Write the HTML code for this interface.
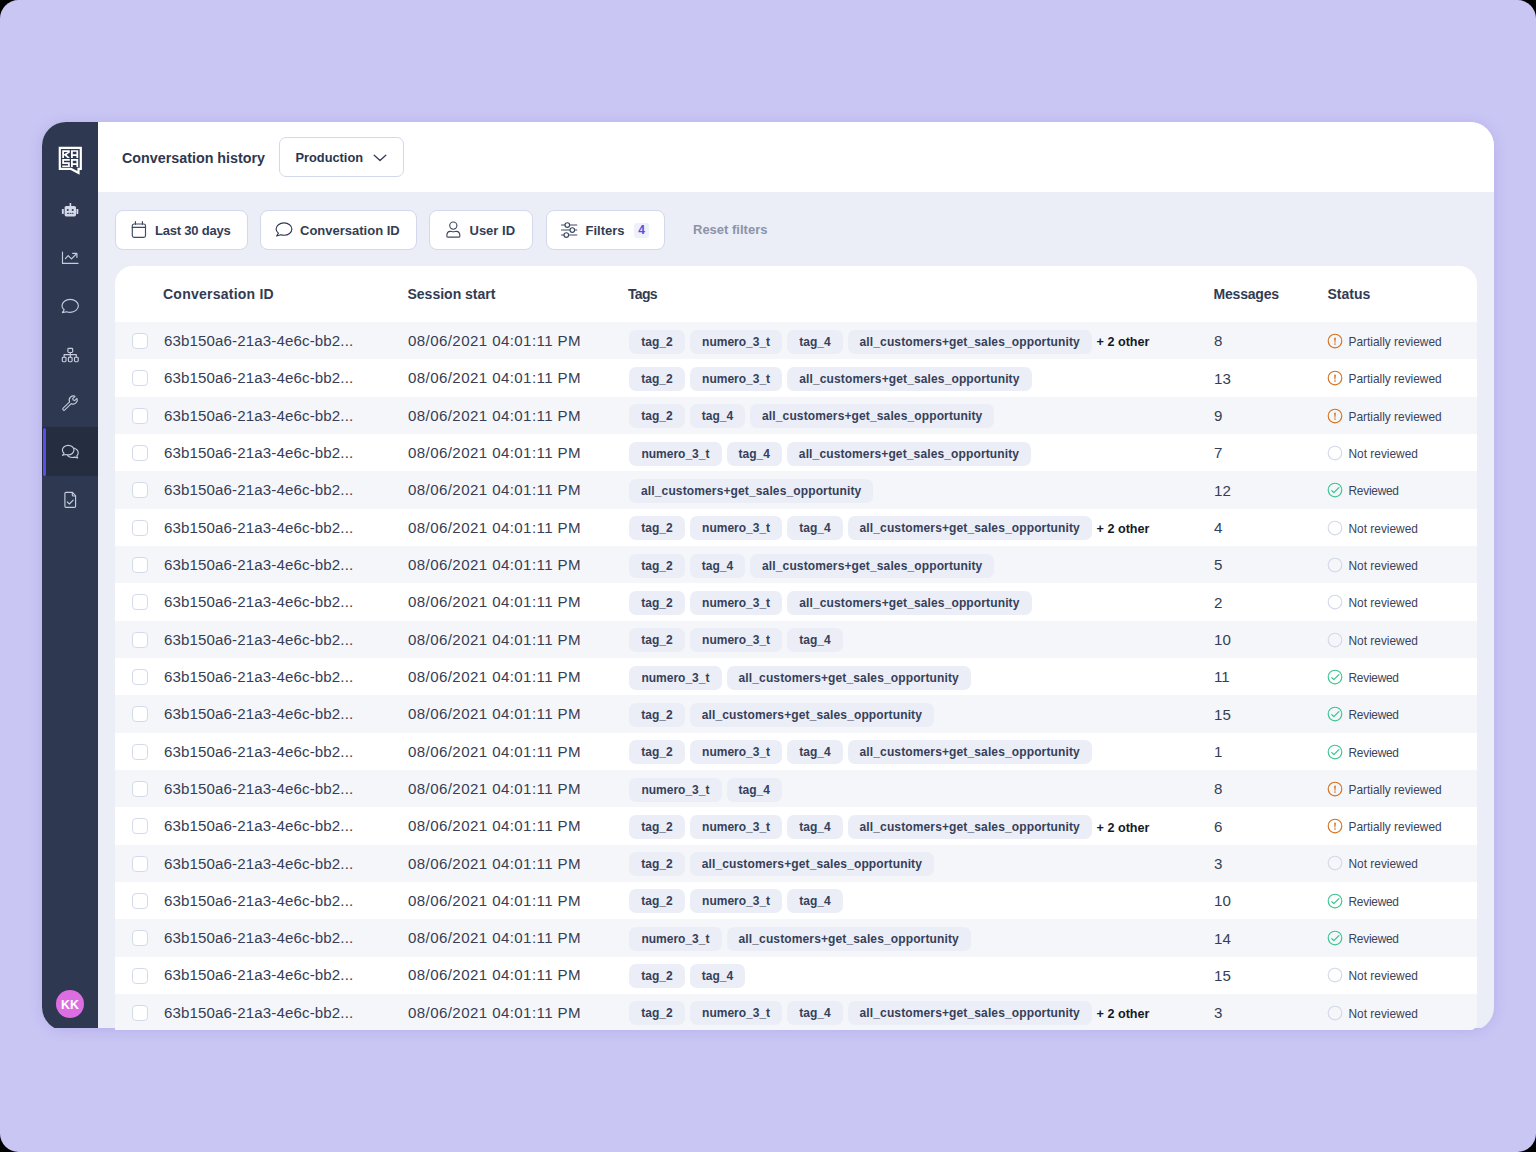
<!DOCTYPE html><html><head><meta charset="utf-8"><style>
*{box-sizing:border-box;margin:0;padding:0}
html,body{width:1536px;height:1152px;overflow:hidden;background:#000;font-family:"Liberation Sans",sans-serif}
.frame{position:absolute;left:0;top:0;width:1536px;height:1152px;border-radius:18.5px;background:#C9C6F4;overflow:hidden}
.shadow{position:absolute;left:42px;top:122px;width:1452px;height:906px;border-radius:24px;box-shadow:0 2px 14px rgba(90,70,200,0.18)}
.clip{position:absolute;left:42px;top:122px;width:1452px;height:906px;overflow:hidden}
.app{position:absolute;left:0;top:0;width:1452px;height:909px;border-radius:24px;background:#EBEEF7;overflow:hidden}
.side{position:absolute;left:0;top:0;width:56px;height:909px;background:#2E3850}
.active{position:absolute;left:0;top:305px;width:56px;height:49px;background:#252D40}
.abar{position:absolute;left:0.5px;top:305.5px;width:3.5px;height:48px;border-radius:2px;background:#5B4EE6}
.hdr{position:absolute;left:56px;top:0;width:1396px;height:70px;background:#fff}
.title{position:absolute;left:24px;top:26.5px;font-size:14.3px;font-weight:700;color:#2E374E;line-height:18px;white-space:nowrap}
.dd{position:absolute;left:181px;top:15px;width:125px;height:40px;border:1px solid #D3D8EA;border-radius:7px;background:#fff}
.dd span{position:absolute;left:15.5px;top:10.5px;font-size:12.8px;font-weight:700;color:#2B354D;line-height:18px}
.btn{position:absolute;top:88px;height:40px;border:1px solid #D3D8EA;border-radius:8px;background:#fff}
.btn .lbl{position:absolute;top:10.5px;font-size:13px;font-weight:700;color:#333D55;line-height:18px;white-space:nowrap}
.btn svg{position:absolute}
.badge{position:absolute;left:87px;top:12px;width:15px;height:15px;border-radius:3px;background:#EEF0FA;color:#5A4FE0;font-size:12px;font-weight:700;line-height:15px;text-align:center}
.reset{position:absolute;left:651px;top:98.5px;font-size:13px;font-weight:700;color:#8C93A8;line-height:18px;white-space:nowrap}
.card{position:absolute;left:115px;top:266px;width:1362px;height:764px;background:#fff;border-radius:18px 18px 7px 0;overflow:hidden}
.th{position:absolute;top:19px;font-size:14px;font-weight:700;color:#323B52;line-height:18px;white-space:nowrap}
.row{position:absolute;left:0;width:1362px;height:37.32px}
.row.odd{background:#F5F6FA}
.cb{position:absolute;left:17px;top:11px;width:15.5px;height:16px;border:1px solid #D5DAEB;border-radius:4px;background:#fff}
.cid,.date,.msg{position:absolute;top:9.95px;font-size:15.1px;color:#353E54;line-height:18px;white-space:nowrap}
.cid{left:49px;letter-spacing:0.12px}
.date{left:293px;letter-spacing:0.4px}
.msg{left:1099px;top:10.4px}
.pill{position:absolute;top:7.6px;height:24px;border-radius:7px;background:#EBEEF7;color:#364059;font-size:12px;font-weight:700;line-height:25.4px;text-align:center;white-space:nowrap}
.more{position:absolute;top:8.4px;height:24px;line-height:24px;font-size:12.6px;font-weight:700;color:#151A26;white-space:nowrap}
.st{position:absolute;left:1212px;top:10.9px;height:16px}
.si{position:absolute;left:0;top:0}
.stl{position:absolute;left:21.5px;top:1px;font-size:11.9px;color:#3A435A;line-height:16px;white-space:nowrap}
.avatar{position:absolute;left:14px;top:868px;width:28px;height:28px;border-radius:14px;background:#DC6EE2;color:#fff;font-size:12.4px;font-weight:700;line-height:31px;text-align:center;letter-spacing:0.2px;text-indent:0.2px}
</style></head><body><div class="frame">
<div class="shadow"></div><div class="clip"><div class="app">
<div class="side"><div class="active"></div><div class="abar"></div>
<svg style="position:absolute;left:0;top:0" width="56" height="906" viewBox="42 122 56 906">
 <g fill="#fff">
  <path fill-rule="evenodd" d="M58.7 146.7H81.9V169.9H79.6V174.8L70.6 169.9H58.7Z M60.9 148.9V167.7H71.2L77.4 171.1V167.7H79.7V148.9Z"/>
  <path d="M62.2 150.2H69.8V152.6L66.6 154.7L69.9 158.1H67.5L64.6 155.4H64V158.1H62.2Z M64 151.9H67.9L64 154.3Z" fill-rule="evenodd"/>
  <path d="M71 150.2H78.2V158.1H76.4V156H72.8V158.1H71Z M72.8 151.8V154.3H76.4V151.8Z" fill-rule="evenodd"/>
  <path d="M62.2 159.1H69.8V160.8H64V162.2H69.8V167.1H62.2V165.4H68V163.9H62.2Z"/>
  <path d="M71 159.1H78.2V167.1H76.4V165H72.8V167.1H71Z M72.8 160.8V163.3H76.4V160.8Z" fill-rule="evenodd"/>
 </g>
 <g fill="#D3D8EA">
  <rect x="64.6" y="206" width="11.4" height="10.4" rx="1.6"/>
  <rect x="69.6" y="203" width="1.6" height="3.5"/>
  <rect x="61.9" y="209" width="1.9" height="5" rx="0.4"/>
  <rect x="76.4" y="209" width="1.9" height="5" rx="0.4"/>
 </g>
 <g fill="#2E3850">
  <rect x="66.9" y="209.1" width="1.7" height="1.8"/>
  <rect x="71.8" y="209.1" width="1.7" height="1.8"/>
  <rect x="66.9" y="212.9" width="2.3" height="0.9"/><rect x="69.7" y="212.9" width="1.5" height="0.9"/><rect x="71.7" y="212.9" width="1.8" height="0.9"/>
 </g>
 <g fill="none" stroke="#C6CCDE" stroke-width="1.15" stroke-linecap="round" stroke-linejoin="round">
  <path d="M62.5 252V263.4H78"/>
  <path d="M65.4 258.6L68.2 255.6L71.5 258.8L76.3 254"/>
  <path d="M72.6 253.3H76.9V257.4"/>
  <path d="M64.2 309.8C62.7 308.7 62 307.3 62 305.8C62 302.2 65.7 299.3 70.2 299.3C74.7 299.3 78.4 302.2 78.4 305.8C78.4 309.4 74.7 312.3 70.2 312.3C68.9 312.3 67.7 312.1 66.7 311.7L62.4 312.6Z"/>
  <rect x="67.9" y="348.3" width="4.8" height="4.2" rx="0.9"/>
  <path d="M70.3 352.5V354.6 M64.1 357.2V354.6H76.3V357.2 M70.3 354.6V357.2"/>
  <rect x="62.3" y="357.2" width="3.7" height="4.5" rx="0.9"/>
  <rect x="68.4" y="357.2" width="3.7" height="4.5" rx="0.9"/>
  <rect x="74.5" y="357.2" width="3.7" height="4.5" rx="0.9"/>
  <path transform="translate(62,395) scale(0.95) translate(-63,-397)" d="M64.2 410.9L71 404.3C70.2 402.6 70.6 400.4 72.1 399.1C73.4 397.9 75.3 397.7 76.7 398.4L74.2 400.8L74.8 402.3L76.3 402.9L78.7 400.5C79.4 402 79.1 403.8 77.9 405.1C76.6 406.5 74.5 406.9 72.8 406.1L66 412.7C65.5 413.2 64.7 413.2 64.2 412.7C63.7 412.2 63.7 411.4 64.2 410.9Z"/>
  <path d="M64 453.3C63 452.4 62.4 451.3 62.4 450.1C62.4 447.4 65 445.3 68.2 445.3C71.4 445.3 74 447.4 74 450.1C74 452.8 71.4 454.9 68.2 454.9C67.4 454.9 66.6 454.8 65.9 454.5L62.5 455.3Z"/>
  <path d="M74.4 448.2C76.7 449.1 78.2 450.8 78.2 452.8C78.2 454 77.7 455.1 76.8 455.9L77.7 457.9L74.6 457.1C73.8 457.4 73 457.5 72.1 457.5C70.2 457.5 68.6 456.8 67.5 455.7"/>
  <path d="M66 492.4H72.5L75.6 495.8V506.2Q75.6 507.3 74.5 507.3H66Q64.9 507.3 64.9 506.2V493.5Q64.9 492.4 66 492.4Z"/>
  <path d="M72.3 492.6V494.9Q72.3 496 73.4 496H75.4"/>
  <path d="M67.2 501.8L69.4 504L73.2 500.1"/>
 </g>
</svg>
<div class="avatar">KK</div></div>
<div class="hdr"><div class="title">Conversation history</div><div class="dd"><span>Production</span><svg style="position:absolute;left:93px;top:16px" width="14" height="8" viewBox="0 0 14 8"><path d="M1.2 1.2L7 6.6L12.8 1.2" fill="none" stroke="#333D55" stroke-width="1.3" stroke-linecap="round" stroke-linejoin="round"/></svg></div></div>
<div class="btn" style="left:73px;width:133px"><svg style="left:0;top:0" width="133" height="40" viewBox="116 211 133 40"><g fill="none" stroke="#3E4A63" stroke-width="1.15" stroke-linecap="round"><rect x="132.3" y="224" width="13.2" height="13.4" rx="1.8"/><path d="M132.3 227.4H145.5 M135.4 221.6V224.3 M142.4 221.6V224.3"/></g></svg><span class="lbl" style="left:39px;letter-spacing:-0.2px">Last 30 days</span></div>
<div class="btn" style="left:218px;width:157px"><svg style="left:0;top:0" width="157" height="40" viewBox="261 211 157 40"><path d="M278.4 233.2C276.9 232.1 276.1 230.7 276.1 229.1C276.1 225.6 279.7 222.9 284 222.9C288.3 222.9 291.9 225.6 291.9 229.1C291.9 232.5 288.3 235.2 284 235.2C282.9 235.2 281.8 235 280.8 234.7L276.6 236Z" fill="none" stroke="#2F3A52" stroke-width="1.15" stroke-linejoin="round"/></svg><span class="lbl" style="left:39px">Conversation ID</span></div>
<div class="btn" style="left:387px;width:104px"><svg style="left:0;top:0" width="104" height="40" viewBox="430 211 104 40"><g fill="none" stroke="#3E4A63" stroke-width="1.15" stroke-linejoin="round"><circle cx="453.3" cy="225.6" r="3.6"/><path d="M446.8 236.2C446.8 232.8 448 231.3 450.3 231.3C451.3 231.3 452 231.7 453.3 231.7C454.6 231.7 455.3 231.3 456.3 231.3C458.6 231.3 459.9 232.8 459.9 236.2C459.9 236.8 459.6 237.1 459 237.1H447.7C447.1 237.1 446.8 236.8 446.8 236.2Z"/></g></svg><span class="lbl" style="left:39.5px">User ID</span></div>
<div class="btn" style="left:504px;width:119px"><svg style="left:0;top:0" width="119" height="40" viewBox="547 211 119 40"><g fill="none" stroke="#3E4A63" stroke-width="1.15" stroke-linecap="round"><path d="M561.5 225H565 M569.6 225H576.8 M561.5 230H570 M574.6 230H576.8 M561.5 235H564 M568.6 235H576.8"/><circle cx="567.3" cy="225" r="2.3"/><circle cx="572.3" cy="230" r="2.3"/><circle cx="566.3" cy="235" r="2.3"/></g></svg><span class="lbl" style="left:38.5px">Filters</span><span class="badge">4</span></div>
<div class="reset">Reset filters</div>
</div></div>
<div class="card">
<div class="th" style="left:48px;letter-spacing:0.24px">Conversation ID</div><div class="th" style="left:292.5px">Session start</div><div class="th" style="left:513px;letter-spacing:-0.7px">Tags</div><div class="th" style="left:1098.5px;letter-spacing:-0.2px">Messages</div><div class="th" style="left:1212.5px">Status</div>
<div class="row odd" style="top:56.10px"><span class="cb"></span><span class="cid">63b150a6-21a3-4e6c-bb2...</span><span class="date">08/06/2021 04:01:11 PM</span><span class="pill" style="left:514.0px;width:56px">tag_2</span><span class="pill" style="left:574.7px;width:92.8px">numero_3_t</span><span class="pill" style="left:672.2px;width:55.6px">tag_4</span><span class="pill" style="left:732.5px;width:244.4px;letter-spacing:0.13px">all_customers+get_sales_opportunity</span><span class="more" style="left:981.6px">+ 2 other</span><span class="msg">8</span><span class="st"><svg class="si" width="16" height="16" viewBox="0 0 16 16"><circle cx="8" cy="8" r="6.8" fill="none" stroke="#D4701E" stroke-width="1.15"/><path d="M7.15 4.9Q8 4.1 8.85 4.9L8.4 9.8H7.6Z" fill="#D4701E"/><circle cx="8" cy="11.1" r="0.8" fill="#D4701E"/></svg><span class="stl">Partially reviewed</span></span></div>
<div class="row" style="top:93.42px"><span class="cb"></span><span class="cid">63b150a6-21a3-4e6c-bb2...</span><span class="date">08/06/2021 04:01:11 PM</span><span class="pill" style="left:514.0px;width:56px">tag_2</span><span class="pill" style="left:574.7px;width:92.8px">numero_3_t</span><span class="pill" style="left:672.2px;width:244.4px;letter-spacing:0.13px">all_customers+get_sales_opportunity</span><span class="msg">13</span><span class="st"><svg class="si" width="16" height="16" viewBox="0 0 16 16"><circle cx="8" cy="8" r="6.8" fill="none" stroke="#D4701E" stroke-width="1.15"/><path d="M7.15 4.9Q8 4.1 8.85 4.9L8.4 9.8H7.6Z" fill="#D4701E"/><circle cx="8" cy="11.1" r="0.8" fill="#D4701E"/></svg><span class="stl">Partially reviewed</span></span></div>
<div class="row odd" style="top:130.74px"><span class="cb"></span><span class="cid">63b150a6-21a3-4e6c-bb2...</span><span class="date">08/06/2021 04:01:11 PM</span><span class="pill" style="left:514.0px;width:56px">tag_2</span><span class="pill" style="left:574.7px;width:55.6px">tag_4</span><span class="pill" style="left:635.0px;width:244.4px;letter-spacing:0.13px">all_customers+get_sales_opportunity</span><span class="msg">9</span><span class="st"><svg class="si" width="16" height="16" viewBox="0 0 16 16"><circle cx="8" cy="8" r="6.8" fill="none" stroke="#D4701E" stroke-width="1.15"/><path d="M7.15 4.9Q8 4.1 8.85 4.9L8.4 9.8H7.6Z" fill="#D4701E"/><circle cx="8" cy="11.1" r="0.8" fill="#D4701E"/></svg><span class="stl">Partially reviewed</span></span></div>
<div class="row" style="top:168.06px"><span class="cb"></span><span class="cid">63b150a6-21a3-4e6c-bb2...</span><span class="date">08/06/2021 04:01:11 PM</span><span class="pill" style="left:514.0px;width:92.8px">numero_3_t</span><span class="pill" style="left:611.5px;width:55.6px">tag_4</span><span class="pill" style="left:671.8px;width:244.4px;letter-spacing:0.13px">all_customers+get_sales_opportunity</span><span class="msg">7</span><span class="st"><svg class="si" width="16" height="16" viewBox="0 0 16 16"><circle cx="8" cy="8" r="6.8" fill="none" stroke="#D3D8EA" stroke-width="1.15"/></svg><span class="stl">Not reviewed</span></span></div>
<div class="row odd" style="top:205.38px"><span class="cb"></span><span class="cid">63b150a6-21a3-4e6c-bb2...</span><span class="date">08/06/2021 04:01:11 PM</span><span class="pill" style="left:514.0px;width:244.4px;letter-spacing:0.13px">all_customers+get_sales_opportunity</span><span class="msg">12</span><span class="st"><svg class="si" width="16" height="16" viewBox="0 0 16 16"><circle cx="8" cy="8" r="6.8" fill="none" stroke="#3CC492" stroke-width="1.15"/><path d="M4.8 8.6L6.8 10.6L11.9 5.6" fill="none" stroke="#3CC492" stroke-width="1.3" stroke-linecap="round" stroke-linejoin="round"/></svg><span class="stl" style="letter-spacing:-0.25px">Reviewed</span></span></div>
<div class="row" style="top:242.70px"><span class="cb"></span><span class="cid">63b150a6-21a3-4e6c-bb2...</span><span class="date">08/06/2021 04:01:11 PM</span><span class="pill" style="left:514.0px;width:56px">tag_2</span><span class="pill" style="left:574.7px;width:92.8px">numero_3_t</span><span class="pill" style="left:672.2px;width:55.6px">tag_4</span><span class="pill" style="left:732.5px;width:244.4px;letter-spacing:0.13px">all_customers+get_sales_opportunity</span><span class="more" style="left:981.6px">+ 2 other</span><span class="msg">4</span><span class="st"><svg class="si" width="16" height="16" viewBox="0 0 16 16"><circle cx="8" cy="8" r="6.8" fill="none" stroke="#D3D8EA" stroke-width="1.15"/></svg><span class="stl">Not reviewed</span></span></div>
<div class="row odd" style="top:280.02px"><span class="cb"></span><span class="cid">63b150a6-21a3-4e6c-bb2...</span><span class="date">08/06/2021 04:01:11 PM</span><span class="pill" style="left:514.0px;width:56px">tag_2</span><span class="pill" style="left:574.7px;width:55.6px">tag_4</span><span class="pill" style="left:635.0px;width:244.4px;letter-spacing:0.13px">all_customers+get_sales_opportunity</span><span class="msg">5</span><span class="st"><svg class="si" width="16" height="16" viewBox="0 0 16 16"><circle cx="8" cy="8" r="6.8" fill="none" stroke="#D3D8EA" stroke-width="1.15"/></svg><span class="stl">Not reviewed</span></span></div>
<div class="row" style="top:317.34px"><span class="cb"></span><span class="cid">63b150a6-21a3-4e6c-bb2...</span><span class="date">08/06/2021 04:01:11 PM</span><span class="pill" style="left:514.0px;width:56px">tag_2</span><span class="pill" style="left:574.7px;width:92.8px">numero_3_t</span><span class="pill" style="left:672.2px;width:244.4px;letter-spacing:0.13px">all_customers+get_sales_opportunity</span><span class="msg">2</span><span class="st"><svg class="si" width="16" height="16" viewBox="0 0 16 16"><circle cx="8" cy="8" r="6.8" fill="none" stroke="#D3D8EA" stroke-width="1.15"/></svg><span class="stl">Not reviewed</span></span></div>
<div class="row odd" style="top:354.66px"><span class="cb"></span><span class="cid">63b150a6-21a3-4e6c-bb2...</span><span class="date">08/06/2021 04:01:11 PM</span><span class="pill" style="left:514.0px;width:56px">tag_2</span><span class="pill" style="left:574.7px;width:92.8px">numero_3_t</span><span class="pill" style="left:672.2px;width:55.6px">tag_4</span><span class="msg">10</span><span class="st"><svg class="si" width="16" height="16" viewBox="0 0 16 16"><circle cx="8" cy="8" r="6.8" fill="none" stroke="#D3D8EA" stroke-width="1.15"/></svg><span class="stl">Not reviewed</span></span></div>
<div class="row" style="top:391.98px"><span class="cb"></span><span class="cid">63b150a6-21a3-4e6c-bb2...</span><span class="date">08/06/2021 04:01:11 PM</span><span class="pill" style="left:514.0px;width:92.8px">numero_3_t</span><span class="pill" style="left:611.5px;width:244.4px;letter-spacing:0.13px">all_customers+get_sales_opportunity</span><span class="msg">11</span><span class="st"><svg class="si" width="16" height="16" viewBox="0 0 16 16"><circle cx="8" cy="8" r="6.8" fill="none" stroke="#3CC492" stroke-width="1.15"/><path d="M4.8 8.6L6.8 10.6L11.9 5.6" fill="none" stroke="#3CC492" stroke-width="1.3" stroke-linecap="round" stroke-linejoin="round"/></svg><span class="stl" style="letter-spacing:-0.25px">Reviewed</span></span></div>
<div class="row odd" style="top:429.30px"><span class="cb"></span><span class="cid">63b150a6-21a3-4e6c-bb2...</span><span class="date">08/06/2021 04:01:11 PM</span><span class="pill" style="left:514.0px;width:56px">tag_2</span><span class="pill" style="left:574.7px;width:244.4px;letter-spacing:0.13px">all_customers+get_sales_opportunity</span><span class="msg">15</span><span class="st"><svg class="si" width="16" height="16" viewBox="0 0 16 16"><circle cx="8" cy="8" r="6.8" fill="none" stroke="#3CC492" stroke-width="1.15"/><path d="M4.8 8.6L6.8 10.6L11.9 5.6" fill="none" stroke="#3CC492" stroke-width="1.3" stroke-linecap="round" stroke-linejoin="round"/></svg><span class="stl" style="letter-spacing:-0.25px">Reviewed</span></span></div>
<div class="row" style="top:466.62px"><span class="cb"></span><span class="cid">63b150a6-21a3-4e6c-bb2...</span><span class="date">08/06/2021 04:01:11 PM</span><span class="pill" style="left:514.0px;width:56px">tag_2</span><span class="pill" style="left:574.7px;width:92.8px">numero_3_t</span><span class="pill" style="left:672.2px;width:55.6px">tag_4</span><span class="pill" style="left:732.5px;width:244.4px;letter-spacing:0.13px">all_customers+get_sales_opportunity</span><span class="msg">1</span><span class="st"><svg class="si" width="16" height="16" viewBox="0 0 16 16"><circle cx="8" cy="8" r="6.8" fill="none" stroke="#3CC492" stroke-width="1.15"/><path d="M4.8 8.6L6.8 10.6L11.9 5.6" fill="none" stroke="#3CC492" stroke-width="1.3" stroke-linecap="round" stroke-linejoin="round"/></svg><span class="stl" style="letter-spacing:-0.25px">Reviewed</span></span></div>
<div class="row odd" style="top:503.94px"><span class="cb"></span><span class="cid">63b150a6-21a3-4e6c-bb2...</span><span class="date">08/06/2021 04:01:11 PM</span><span class="pill" style="left:514.0px;width:92.8px">numero_3_t</span><span class="pill" style="left:611.5px;width:55.6px">tag_4</span><span class="msg">8</span><span class="st"><svg class="si" width="16" height="16" viewBox="0 0 16 16"><circle cx="8" cy="8" r="6.8" fill="none" stroke="#D4701E" stroke-width="1.15"/><path d="M7.15 4.9Q8 4.1 8.85 4.9L8.4 9.8H7.6Z" fill="#D4701E"/><circle cx="8" cy="11.1" r="0.8" fill="#D4701E"/></svg><span class="stl">Partially reviewed</span></span></div>
<div class="row" style="top:541.26px"><span class="cb"></span><span class="cid">63b150a6-21a3-4e6c-bb2...</span><span class="date">08/06/2021 04:01:11 PM</span><span class="pill" style="left:514.0px;width:56px">tag_2</span><span class="pill" style="left:574.7px;width:92.8px">numero_3_t</span><span class="pill" style="left:672.2px;width:55.6px">tag_4</span><span class="pill" style="left:732.5px;width:244.4px;letter-spacing:0.13px">all_customers+get_sales_opportunity</span><span class="more" style="left:981.6px">+ 2 other</span><span class="msg">6</span><span class="st"><svg class="si" width="16" height="16" viewBox="0 0 16 16"><circle cx="8" cy="8" r="6.8" fill="none" stroke="#D4701E" stroke-width="1.15"/><path d="M7.15 4.9Q8 4.1 8.85 4.9L8.4 9.8H7.6Z" fill="#D4701E"/><circle cx="8" cy="11.1" r="0.8" fill="#D4701E"/></svg><span class="stl">Partially reviewed</span></span></div>
<div class="row odd" style="top:578.58px"><span class="cb"></span><span class="cid">63b150a6-21a3-4e6c-bb2...</span><span class="date">08/06/2021 04:01:11 PM</span><span class="pill" style="left:514.0px;width:56px">tag_2</span><span class="pill" style="left:574.7px;width:244.4px;letter-spacing:0.13px">all_customers+get_sales_opportunity</span><span class="msg">3</span><span class="st"><svg class="si" width="16" height="16" viewBox="0 0 16 16"><circle cx="8" cy="8" r="6.8" fill="none" stroke="#D3D8EA" stroke-width="1.15"/></svg><span class="stl">Not reviewed</span></span></div>
<div class="row" style="top:615.90px"><span class="cb"></span><span class="cid">63b150a6-21a3-4e6c-bb2...</span><span class="date">08/06/2021 04:01:11 PM</span><span class="pill" style="left:514.0px;width:56px">tag_2</span><span class="pill" style="left:574.7px;width:92.8px">numero_3_t</span><span class="pill" style="left:672.2px;width:55.6px">tag_4</span><span class="msg">10</span><span class="st"><svg class="si" width="16" height="16" viewBox="0 0 16 16"><circle cx="8" cy="8" r="6.8" fill="none" stroke="#3CC492" stroke-width="1.15"/><path d="M4.8 8.6L6.8 10.6L11.9 5.6" fill="none" stroke="#3CC492" stroke-width="1.3" stroke-linecap="round" stroke-linejoin="round"/></svg><span class="stl" style="letter-spacing:-0.25px">Reviewed</span></span></div>
<div class="row odd" style="top:653.22px"><span class="cb"></span><span class="cid">63b150a6-21a3-4e6c-bb2...</span><span class="date">08/06/2021 04:01:11 PM</span><span class="pill" style="left:514.0px;width:92.8px">numero_3_t</span><span class="pill" style="left:611.5px;width:244.4px;letter-spacing:0.13px">all_customers+get_sales_opportunity</span><span class="msg">14</span><span class="st"><svg class="si" width="16" height="16" viewBox="0 0 16 16"><circle cx="8" cy="8" r="6.8" fill="none" stroke="#3CC492" stroke-width="1.15"/><path d="M4.8 8.6L6.8 10.6L11.9 5.6" fill="none" stroke="#3CC492" stroke-width="1.3" stroke-linecap="round" stroke-linejoin="round"/></svg><span class="stl" style="letter-spacing:-0.25px">Reviewed</span></span></div>
<div class="row" style="top:690.54px"><span class="cb"></span><span class="cid">63b150a6-21a3-4e6c-bb2...</span><span class="date">08/06/2021 04:01:11 PM</span><span class="pill" style="left:514.0px;width:56px">tag_2</span><span class="pill" style="left:574.7px;width:55.6px">tag_4</span><span class="msg">15</span><span class="st"><svg class="si" width="16" height="16" viewBox="0 0 16 16"><circle cx="8" cy="8" r="6.8" fill="none" stroke="#D3D8EA" stroke-width="1.15"/></svg><span class="stl">Not reviewed</span></span></div>
<div class="row odd" style="top:727.86px"><span class="cb"></span><span class="cid">63b150a6-21a3-4e6c-bb2...</span><span class="date">08/06/2021 04:01:11 PM</span><span class="pill" style="left:514.0px;width:56px">tag_2</span><span class="pill" style="left:574.7px;width:92.8px">numero_3_t</span><span class="pill" style="left:672.2px;width:55.6px">tag_4</span><span class="pill" style="left:732.5px;width:244.4px;letter-spacing:0.13px">all_customers+get_sales_opportunity</span><span class="more" style="left:981.6px">+ 2 other</span><span class="msg">3</span><span class="st"><svg class="si" width="16" height="16" viewBox="0 0 16 16"><circle cx="8" cy="8" r="6.8" fill="none" stroke="#D3D8EA" stroke-width="1.15"/></svg><span class="stl">Not reviewed</span></span></div>
</div>
</div></body></html>
